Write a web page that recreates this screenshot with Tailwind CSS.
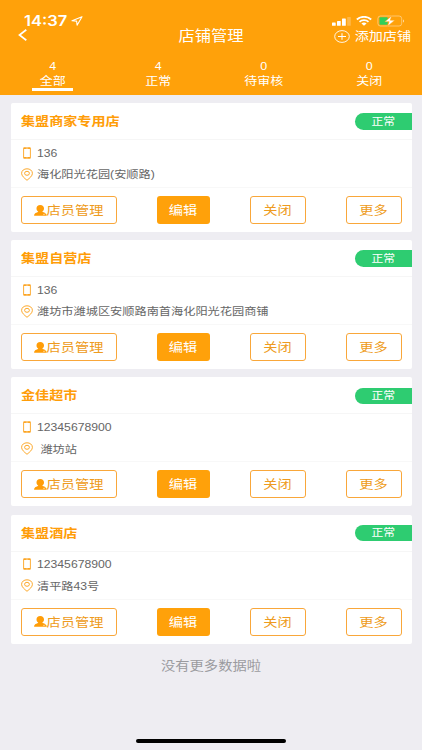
<!DOCTYPE html>
<html lang="zh-CN">
<head>
<meta charset="utf-8">
<meta name="viewport" content="width=device-width, initial-scale=1">
<title>店铺管理</title>
<script src="https://cdn.jsdelivr.net/npm/@tailwindcss/browser@4"></script>
</head>
<body class="bg-[#eeedf2]">
<svg class="hidden">
  <symbol id="phone" viewBox="0 0 8 12"><path d="M.6 1.6V10.4M7.4 1.6V10.4" fill="none" stroke="#fca421" stroke-width=".9"/><path d="M1 .3h6q.7 0 .7.7v.9H.3V1Q.3.3 1 .3ZM.3 10.1h7.4v.9q0 .7-.7.7H1q-.7 0-.7-.7Z" fill="#fca421"/><path d="M2.8 1.1h2.4M3.4 10.9h1.2" stroke="#fff" stroke-width=".5"/></symbol>
  <symbol id="pin" viewBox="0 0 12 13"><path d="M6 12.300C3.200 9.900.6 8 .6 5.300.6 2.600 3 .8 6 .8s5.400 1.800 5.400 4.500C11.400 8 8.800 9.900 6 12.300Z" fill="none" stroke="#fca421" stroke-width=".95"/><ellipse cx="6" cy="5.300" rx="2.400" ry="2" fill="none" stroke="#fca421" stroke-width=".95"/></symbol>
  <symbol id="user" viewBox="0 0 13 11"><path d="M6.200.1C8.600.1 10 1.600 10 3.600c0 1.500-.7 2.400-1.600 3v.5c1.700.5 3.200.9 3.800 1.800.3.400.5 1.200.5 1.800H.1c0-.9.2-1.600.7-2 .9-.8 2.200-1.100 3.300-1.600v-.5C3.200 6 2.500 5.100 2.500 3.600 2.500 1.600 3.900.1 6.200.1Z" fill="#ff9d08"/><path d="m9 9 .9.700 1.700-1.200" fill="none" stroke="#fff" stroke-width=".5"/></symbol>
</svg>
<div class="relative flex h-[750px] w-[422px] flex-col overflow-hidden bg-[#eeedf2] font-['Liberation_Sans','Noto_Sans_CJK_SC',sans-serif]">
  <header class="h-[94.500px] shrink-0 bg-[#ffa10a] text-white">
    <div class="flex h-7 items-end justify-between pr-[17px] pl-6">
      <div class="flex h-[14px] items-center gap-[4px]">
        <span class="inline-block scale-y-[.9] font-['Inter',sans-serif] text-[16.500px] leading-[14px] font-semibold">14:37</span>
        <svg class="h-[10px] w-[12px]" viewBox="0 0 12 10"><path d="M11 .8 1 4.700l4.600.4.500 4.100Z" fill="none" stroke="#fff" stroke-width="1.100" stroke-linejoin="round"/></svg>
      </div>
      <div class="flex h-[14px] items-center gap-[5px]">
        <svg class="h-[9px] w-[19px]" viewBox="0 0 19 9"><g fill="#fff"><rect y="5.500" width="3.700" height="3.300" rx=".6"/><rect x="5" y="4" width="3.700" height="4.800" rx=".6"/><rect x="10" y="1.500" width="3.800" height="7.300" rx=".6"/><rect x="15.200" width="3.600" height="8.800" rx=".6" opacity=".25"/></g></svg>
        <svg class="h-[10px] w-[16px]" viewBox="0 0 16 10"><g fill="none" stroke="#fff" stroke-width="1.800"><path d="M.8 3.500C4.800-.1 11.200-.1 15.200 3.500"/><path d="M3.500 5.900c2.500-2.300 6.500-2.300 9 0"/></g><path d="M5.400 7.500c1.500-1.200 3.700-1.200 5.200 0L8 9.800Z" fill="#fff"/></svg>
        <svg class="h-[12px] w-[28px]" viewBox="0 0 28 12"><rect x=".9" y="1" width="23.800" height="10" rx="2.600" fill="none" stroke="#fff" stroke-opacity=".45" stroke-width=".9"/><rect x="2.500" y="2.300" width="8.200" height="7.400" rx="1" fill="#2fd05a"/><path d="M26 4.500c1.400.5 1.400 2.500 0 3Z" fill="#fff" fill-opacity=".6"/><path d="M14.600.9 7.800 6.700h4.300l-1.500 4.500 7.200-6h-4.500Z" fill="#fff" stroke="#ffa10a" stroke-width=".5"/></svg>
      </div>
    </div>
    <div class="grid h-[16px] grid-cols-[1fr_auto_1fr] items-center pr-[11px] pl-[18px]">
      <svg class="h-[12px] w-[9px] -translate-y-px" viewBox="0 0 9 12"><path d="M8.300.8 1.500 6l6.800 5.200" fill="none" stroke="#fff" stroke-width="1.700"/></svg>
      <h1 class="-ml-[7px] scale-y-[.88] text-[16.300px] leading-4">店铺管理</h1>
      <div class="flex items-center justify-end gap-[5px]">
        <svg class="h-[13px] w-[16px]" viewBox="0 0 16 13"><ellipse cx="8" cy="6.500" rx="7.300" ry="5.900" fill="none" stroke="#fff" stroke-width=".9"/><path d="M8 3.200v6.600M4 6.500h8" stroke="#fff" stroke-width="1"/></svg>
        <span class="inline-block translate-y-[0.500px] scale-y-[.88] text-[14.100px] leading-4">添加店铺</span>
      </div>
    </div>
    <nav id="tabs" class="mt-[15px] grid grid-cols-4 text-center"></nav>
  </header>
  <main id="stores" class="mt-[8.500px] flex flex-col gap-[8.200px] pr-[10.500px] pl-[10.500px]"></main>
  <p class="mt-[13px] scale-y-[.88] text-center text-[14.300px] leading-[18px] text-[#9b9b9f]">没有更多数据啦</p>
  <div class="absolute bottom-[7px] left-[136px] h-[4.500px] w-[150px] rounded-full bg-black"></div>
</div>
<script>
const tabs = [['4', '全部'], ['4', '正常'], ['0', '待审核'], ['0', '关闭']];
document.getElementById('tabs').innerHTML = tabs.map(([count, label], i) => `
  <div class="flex flex-col items-center">
    <span class="scale-y-[.9] text-[12.500px] leading-[14px]">${count}</span>
    <span class="mt-px translate-y-[0.500px] scale-y-[.88] text-[13px] leading-[14px]">${label}</span>
    ${i === 0 ? '<i class="block h-[2.500px] w-[41px] bg-white"></i>' : ''}
  </div>`).join('');

const stores = [
  ['集盟商家专用店', '136', '海化阳光花园(安顺路)'],
  ['集盟自营店', '136', '潍坊市潍城区安顺路南首海化阳光花园商铺'],
  ['金佳超市', '12345678900', '&nbsp;潍坊站'],
  ['集盟酒店', '12345678900', '清平路43号']
];
document.getElementById('stores').innerHTML = stores.map(([name, phone, address]) => `
  <section class="flex h-[129px] flex-col rounded-[2px] bg-white">
    <div class="flex h-[37px] items-center justify-between border-b border-[#f6f6f6] pl-[10.500px]">
      <h2 class="translate-y-px scale-y-[.88] text-[14.100px] leading-4 font-bold text-[#ff9d08]">${name}</h2>
      <span class="mt-px flex h-[16.500px] w-[56.500px] items-center justify-center rounded-l-full bg-[#2ecc71] text-[11.800px] text-white"><span class="translate-y-[0.500px] scale-y-[.88]">正常</span></span>
    </div>
    <div class="flex h-[48px] flex-col justify-center gap-[7.500px] border-b border-[#f8f8f8] pl-[10px] text-[12.200px] leading-[14px] text-[#666]">
      <div class="flex items-center gap-[4.500px]"><span class="flex w-3 justify-center"><svg class="h-[12px] w-[8px]"><use href="#phone"/></svg></span><span class="translate-y-[0.300px] scale-y-[.9]">${phone}</span></div>
      <div class="flex items-center gap-[4.500px]"><svg class="h-[13px] w-[12px]"><use href="#pin"/></svg><span class="translate-y-[0.800px] scale-y-[.88]">${address}</span></div>
    </div>
    <div class="flex h-[44px] items-center justify-between px-[10px] text-[14.200px] leading-4 text-[#ee9b20]">
      <button class="flex h-[28px] w-[96px] items-center justify-center rounded-[3px] border border-[#f9a73a]"><svg class="h-[11px] w-[13px]"><use href="#user"/></svg><span class="translate-y-px scale-y-[.88]">店员管理</span></button>
      <button class="flex h-[28px] w-[53px] items-center justify-center rounded-[3px] bg-[#ffa10a] text-white"><span class="translate-y-px scale-y-[.88]">编辑</span></button>
      <button class="flex h-[28px] w-[56px] items-center justify-center rounded-[3px] border border-[#f9a73a]"><span class="translate-y-px scale-y-[.88]">关闭</span></button>
      <button class="flex h-[28px] w-[56px] items-center justify-center rounded-[3px] border border-[#f9a73a]"><span class="translate-y-px scale-y-[.88]">更多</span></button>
    </div>
  </section>`).join('');
</script>
</body>
</html>
